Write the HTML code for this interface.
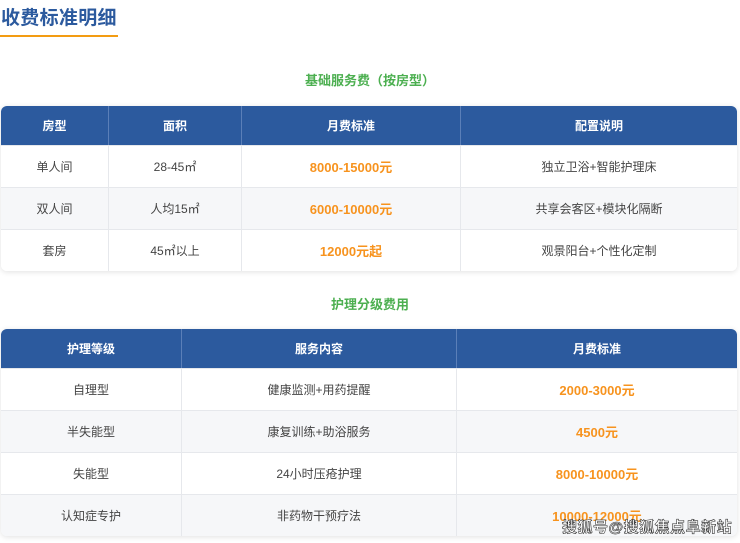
<!DOCTYPE html>
<html><head><meta charset="utf-8"><style>
*{margin:0;padding:0;box-sizing:border-box}
body{width:740px;height:543px;background:#fff;font-family:"Liberation Sans","Noto Sans CJK SC",sans-serif;position:relative;overflow:hidden}
h1{position:absolute;left:1px;top:3px;font-size:19px;color:#2c5a9e;font-weight:bold;letter-spacing:0.3px}
.ul{position:absolute;left:0;top:35px;width:118px;height:2px;background:#f39c12}
.sub{position:absolute;left:0;width:740px;text-align:center;color:#4caf50;font-weight:bold;font-size:13px}
table{position:absolute;left:1px;width:736px;border-collapse:separate;border-spacing:0;border-radius:6px;overflow:hidden;box-shadow:0 1px 6px rgba(0,0,0,.12);font-size:12px;color:#444}
th{background:#2c5a9e;color:#fff;font-weight:bold;height:39px;border-right:1px solid #5b7fb8}
td{height:42px;text-align:center;border-right:1px solid #e6e8ec;border-top:1px solid #e6e8ec;background:#fff}
th:last-child,td:last-child{border-right:none}
tr:nth-child(odd) td{background:#f6f7f9}
.p{color:#f7931e;font-weight:bold;font-size:13px}
.wm{position:absolute;left:562px;top:516px;font-size:15px;font-weight:bold;color:#fff;-webkit-text-stroke:0.6px #333;letter-spacing:0.5px}
</style></head><body>
<h1>收费标准明细</h1><div class="ul"></div>
<div class="sub" style="top:70px">基础服务费（按房型）</div>
<table style="top:106px">
<tr><th style="width:108px">房型</th><th style="width:133px">面积</th><th style="width:219px">月费标准</th><th>配置说明</th></tr>
<tr><td>单人间</td><td>28-45㎡</td><td class="p">8000-15000元</td><td>独立卫浴+智能护理床</td></tr>
<tr><td>双人间</td><td>人均15㎡</td><td class="p">6000-10000元</td><td>共享会客区+模块化隔断</td></tr>
<tr><td>套房</td><td>45㎡以上</td><td class="p">12000元起</td><td>观景阳台+个性化定制</td></tr>
</table>
<div class="sub" style="top:294px">护理分级费用</div>
<table style="top:329px">
<tr><th style="width:181px">护理等级</th><th style="width:275px">服务内容</th><th>月费标准</th></tr>
<tr><td>自理型</td><td>健康监测+用药提醒</td><td class="p">2000-3000元</td></tr>
<tr><td>半失能型</td><td>康复训练+助浴服务</td><td class="p">4500元</td></tr>
<tr><td>失能型</td><td>24小时压疮护理</td><td class="p">8000-10000元</td></tr>
<tr><td>认知症专护</td><td>非药物干预疗法</td><td class="p">10000-12000元</td></tr>
</table>
<div class="wm">搜狐号@搜狐焦点阜新站</div>
</body></html>
